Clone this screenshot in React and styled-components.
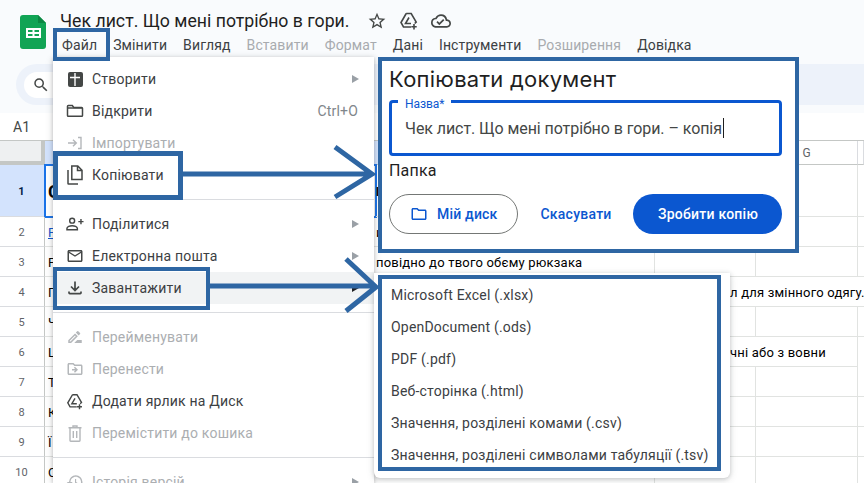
import React from "react";
import styled, { createGlobalStyle } from "styled-components";
import {
  MdOutlineCloudDone,
  MdOutlineDriveFileMove,
  MdOutlineDriveFileRenameOutline,
  MdOutlineFolder,
  MdOutlineHistory,
  MdOutlineMailOutline,
  MdOutlineSearch,
  MdOutlineStarBorder,
} from "react-icons/md";

const ANNOTATION = "#2e66a3";

const GlobalStyle = createGlobalStyle`
  html, body {
    margin: 0;
    padding: 0;
    background: #fff;
    overflow: hidden;
  }
  * {
    box-sizing: border-box;
  }
`;

const Page = styled.div`
  position: relative;
  width: 864px;
  height: 483px;
  overflow: hidden;
  background: #fff;
  font-family: Roboto, "Liberation Sans", sans-serif;
  color: #202124;
`;

const Header = styled.header`
  display: flex;
  height: 64px;
  padding-left: 20px;
  gap: 14px;
  background: #f9fbfd;
`;

const LogoWrap = styled.div`
  padding-top: 15px;
  line-height: 0;
`;

const TitleColumn = styled.div`
  display: flex;
  flex-direction: column;
`;

const TitleRow = styled.div`
  display: flex;
  align-items: center;
  height: 33px;
  padding-top: 9px;
  color: #444746;
`;

const DocTitle = styled.div`
  width: 307px;
  font-size: 17.7px;
  color: #1f1f1f;
`;

const TitleIcons = styled.div`
  display: flex;
  gap: 12px;
  font-size: 20px;
  line-height: 0;
`;

const MenuBar = styled.nav`
  display: flex;
  gap: 16px;
  height: 24px;
  align-items: center;
  padding-left: 2px;
`;

const MenuBarItem = styled.span`
  font-size: 14px;
  letter-spacing: 0.13px;
  color: ${(p) => (p.$off ? "#a8abaf" : "#3c4043")};
`;

const ToolbarWrap = styled.div`
  height: 49px;
  padding: 0 0 8px 16px;
  background: #f9fbfd;
`;

const Toolbar = styled.div`
  height: 41px;
  display: flex;
  align-items: center;
  padding-left: 8px;
  border-radius: 22px 0 0 22px;
  background: #edf2fa;
`;

const SearchPill = styled.div`
  display: flex;
  align-items: center;
  width: 140px;
  height: 26px;
  padding-left: 8px;
  border-radius: 13px;
  background: #fff;
  font-size: 18px;
  color: #444746;
`;

const FormulaBar = styled.div`
  display: flex;
  align-items: center;
  height: 28px;
  padding-left: 13px;
  font-size: 14px;
  color: #444746;
  border-bottom: 1px solid #c4c7c5;
`;

const HeaderRow = styled.div`
  display: grid;
  grid-template-columns: 45px 610px 101px 102px 1fr;
  height: 24px;
  background: #fff;
`;

const Corner = styled.div`
  background: #eef0f1;
  border-right: 4px solid #c4c7c5;
  border-bottom: 4px solid #c4c7c5;
`;

const ColHead = styled.div`
  display: flex;
  align-items: center;
  justify-content: center;
  font-size: 12px;
  color: #5f6368;
  background: ${(p) => (p.$active ? "#d3e3fd" : "#fff")};
  border-right: 1px solid #dadce0;
  border-bottom: 1px solid #c4c7c5;
`;

const Row = styled.div`
  display: grid;
  grid-template-columns: 45px 331px 279px 101px 102px 1fr;
  height: ${(p) => p.$height || 30}px;
`;

const RowNum = styled.div`
  display: flex;
  align-items: center;
  justify-content: center;
  padding: 1px 1px 0 0;
  font-size: 11px;
  font-weight: ${(p) => (p.$active ? 700 : 400)};
  color: ${(p) => (p.$active ? "#041e49" : "#5f6368")};
  background: ${(p) => (p.$active ? "#d3e3fd" : "#fff")};
  border-right: 1px solid #c4c7c5;
  border-bottom: 1px solid #dadce0;
`;

const Cell = styled.div`
  display: flex;
  align-items: center;
  padding-top: 2px;
  padding-left: ${(p) => p.$pad || 0}px;
  white-space: nowrap;
  font-size: 13px;
  font-weight: ${(p) => (p.$bold ? 700 : 400)};
  letter-spacing: 0.2px;
  color: #000;
  border-bottom: 1px solid #e1e3e1;
  border-right: ${(p) => (p.$line ? "1px solid #e1e3e1" : "none")};
  grid-column: ${(p) => (p.$span ? `span ${p.$span}` : "auto")};
`;

const FirstCell = styled(Cell)`
  padding-left: 3px;
  outline: ${(p) => (p.$selected ? "2px solid #1a73e8" : "none")};
  outline-offset: -1px;
  font-size: ${(p) => (p.$selected ? "18px" : "13px")};
  font-weight: ${(p) => (p.$selected ? 700 : 400)};
`;

const LinkText = styled.span`
  color: #1155cc;
  text-decoration: underline;
`;

const Menu = styled.div`
  position: absolute;
  left: 53px;
  top: 57px;
  width: 321px;
  height: 426px;
  padding-top: 6px;
  overflow: hidden;
  background: #fff;
  box-shadow: 0 1px 4px rgba(60, 64, 67, 0.3), 0 2px 8px rgba(60, 64, 67, 0.15);
`;

const MenuItem = styled.div`
  display: flex;
  align-items: center;
  height: 32px;
  padding: 0 16px 0 13px;
  font-size: 14px;
  letter-spacing: 0.2px;
  color: ${(p) => (p.$off ? "#abaeb1" : "#3c4043")};
  background: ${(p) => (p.$hover ? "#f1f3f4" : "transparent")};
`;

const MenuIcon = styled.span`
  display: flex;
  align-items: center;
  justify-content: center;
  width: 18px;
  margin-right: 8px;
  font-size: 18px;
  color: ${(p) => (p.$off ? "#b4b7ba" : "#444746")};
`;

const MenuLabel = styled.span`
  flex: 1;
`;

const Shortcut = styled.span`
  color: #80868b;
  letter-spacing: 0.2px;
`;

const SubArrow = styled.span`
  width: 0;
  height: 0;
  margin-right: -1px;
  border-left: 7px solid ${(p) => (p.$dark ? "#202124" : "#9aa0a6")};
  border-top: 4px solid transparent;
  border-bottom: 4px solid transparent;
`;

const Divider = styled.div`
  height: 1px;
  margin: 8px 0;
  background: #dadce0;
`;

const Dialog = styled.section`
  position: absolute;
  left: 378px;
  top: 57px;
  width: 421px;
  height: 196px;
  padding: 0 13px 0 7px;
  background: #fff;
  border: 4px solid ${ANNOTATION};
`;

const DialogTitle = styled.h2`
  margin: 0;
  height: 36px;
  line-height: 36px;
  font-family: Inter, "Open Sans", sans-serif;
  font-size: 22px;
  font-weight: 400;
  letter-spacing: 0.25px;
  color: #1f1f1f;
`;

const Field = styled.div`
  position: relative;
  display: flex;
  align-items: center;
  height: 56px;
  margin-top: 3px;
  padding-left: 13px;
  border: 3px solid #0b57d0;
  border-radius: 4px;
  font-size: 16px;
  letter-spacing: -0.07px;
  color: #444746;
`;

const FieldLabel = styled.label`
  position: absolute;
  left: 6px;
  top: -5px;
  padding: 0 7px;
  background: #fff;
  font-size: 12px;
  line-height: 12px;
  color: #0b57d0;
`;

const Caret = styled.span`
  width: 1px;
  height: 20px;
  margin-left: 1px;
  background: #1f1f1f;
`;

const FolderLabel = styled.div`
  height: 24px;
  margin-top: 3px;
  line-height: 24px;
  font-size: 16px;
  letter-spacing: 0.2px;
  color: #1f1f1f;
`;

const DialogActions = styled.div`
  display: flex;
  justify-content: space-between;
  align-items: center;
  margin-top: 11px;
`;

const FolderButton = styled.button`
  display: flex;
  align-items: center;
  gap: 9px;
  width: 129px;
  height: 40px;
  padding: 0 0 0 20px;
  background: #fff;
  border: 1px solid #747775;
  border-radius: 20px;
  font-family: inherit;
  font-size: 14px;
  font-weight: 500;
  letter-spacing: 0.2px;
  color: #0b57d0;
  svg {
    font-size: 18px;
  }
`;

const TextButton = styled.button`
  width: 95px;
  height: 40px;
  padding: 0 0 0 1px;
  background: none;
  border: 0;
  font-family: inherit;
  font-size: 14px;
  font-weight: 500;
  letter-spacing: 0.25px;
  color: #0b57d0;
`;

const PrimaryButton = styled(TextButton)`
  width: 149px;
  background: #0b57d0;
  border-radius: 20px;
  color: #fff;
`;

const SubMenu = styled.div`
  position: absolute;
  left: 374px;
  top: 273px;
  width: 356px;
  height: 205px;
  padding: 2px 0 0 4px;
  background: #fff;
  border-radius: 0 0 6px 6px;
  box-shadow: 0 1px 4px rgba(60, 64, 67, 0.25), 0 2px 8px rgba(60, 64, 67, 0.12);
`;

const SubMenuList = styled.div`
  width: 343px;
  height: 196px;
  padding-left: 9px;
  border: 4px solid ${ANNOTATION};
`;

const SubMenuItem = styled.div`
  display: flex;
  align-items: center;
  height: 32px;
  font-size: 14px;
  letter-spacing: 0.2px;
  color: #3c4043;
`;

const Frame = styled.div`
  position: absolute;
  left: ${(p) => p.$x}px;
  top: ${(p) => p.$y}px;
  width: ${(p) => p.$w}px;
  height: ${(p) => p.$h}px;
  border: ${(p) => p.$b || 4}px solid ${ANNOTATION};
`;

const Arrow = styled.svg`
  position: absolute;
  left: 0;
  top: 0;
  pointer-events: none;
`;

function SheetsLogo() {
  return (
    <svg width="26" height="34" viewBox="0 0 26 34">
      <path d="M3 0h15l8 8v23a3 3 0 0 1-3 3H3a3 3 0 0 1-3-3V3a3 3 0 0 1 3-3z" fill="#11a455" />
      <path d="M18 0l8 8h-8z" fill="#0c8743" />
      <path d="M6 13h15v10H6z" fill="#fff" />
      <path d="M8 15h4.500v2H8zM14.500 15H19v2h-4.500zM8 19h4.500v2H8zM14.500 19H19v2h-4.500z" fill="#11a455" />
    </svg>
  );
}

function NewIcon() {
  return (
    <svg width="15" height="15" viewBox="0 0 15 15">
      <rect width="15" height="15" rx="2" fill="#444746" />
      <path d="M7 1v13M2 5.500h10" stroke="#fff" strokeWidth="1.4" />
    </svg>
  );
}

function OpenIcon() {
  return (
    <svg width="18" height="18" viewBox="0 0 18 18" fill="none" stroke="#444746" strokeWidth="1.5">
      <path d="M1.500 13.500V4.300c0-.4.3-.8.800-.8h4l1.500 2h7.900c.4 0 .8.300.8.800v7.200c0 .4-.4.800-.8.800H2.300c-.5 0-.8-.4-.8-.8z" />
      <path d="M2 6h14" />
    </svg>
  );
}

function ImportIcon() {
  return (
    <svg width="16" height="14" viewBox="0 0 16 14" fill="none" stroke="#b4b7ba" strokeWidth="1.4">
      <path d="M1 7h8M6 3.800 9.300 7 6 10.200M11 1.500h3v11h-3" />
    </svg>
  );
}

function CopyIcon() {
  return (
    <svg width="16" height="20" viewBox="0 0 16 20" fill="none" stroke="#444746" strokeWidth="1.5">
      <path d="M4.800 1h6l4.200 4.200v9.300H4.800zM10.500 1v4.500H15" />
      <path d="M1 5v13.500c0 .3.200.5.500.5H11" />
    </svg>
  );
}

function ShareIcon() {
  return (
    <svg width="19" height="14" viewBox="0 0 19 14" fill="none" stroke="#444746" strokeWidth="1.5">
      <circle cx="6.500" cy="3.500" r="2.600" />
      <path d="M1 13v-1.200c0-1.800 3-3 5.500-3s5.500 1.200 5.500 3V13z" />
      <path d="M13 4.500h5.500M15.800 1.800v5.400" />
    </svg>
  );
}

function DownloadIcon() {
  return (
    <svg width="14" height="14" viewBox="0 0 14 14" fill="none" stroke="#444746" strokeWidth="1.7">
      <path d="M7 0.500v8.500M3 5.500l4 4 4-4M1 10.500v1.300c0 .5.300.8.800.8h10.400c.5 0 .8-.3.800-.8v-1.300" />
    </svg>
  );
}

function DriveAddIcon({ size = 20 }) {
  return (
    <svg width={size} height={size} viewBox="0 0 20 20" fill="none" stroke="currentColor" strokeWidth="1.6">
      <path d="M7.200 2.500h5l5 8.500-1.500 1.500M7.200 2.500 2 11.500l2.500 4.500h7.500" />
      <path d="M10 6.500 6.500 12.500h5.500" />
      <path d="M15 13v5.500M12.300 15.800h5.400" />
    </svg>
  );
}

function TrashIcon() {
  return (
    <svg width="14" height="17" viewBox="0 0 14 17" fill="none" stroke="#b4b7ba" strokeWidth="1.4">
      <path d="M0.500 2.800h13M5 2.800V1h4v1.800M2 2.800v12.700c0 .4.300.7.700.7h8.600c.4 0 .7-.3.700-.7V2.800M5.300 6v7M8.700 6v7" />
    </svg>
  );
}

const arrows = [
  "M183 174H372M335 147 372 174 335 197",
  "M210 286H375M346 259 376 287 346 311",
];

const fileItems = [
  { label: "Створити", icon: <NewIcon />, sub: true },
  { label: "Відкрити", icon: <OpenIcon />, shortcut: "Ctrl+O" },
  { label: "Імпортувати", icon: <ImportIcon />, off: true },
  { label: "Копіювати", icon: <CopyIcon /> },
  "divider",
  { label: "Поділитися", icon: <ShareIcon />, sub: true },
  { label: "Електронна пошта", icon: <MdOutlineMailOutline size={20} />, sub: true },
  { label: "Завантажити", icon: <DownloadIcon />, sub: true, hover: true },
  "divider",
  { label: "Перейменувати", icon: <MdOutlineDriveFileRenameOutline />, off: true },
  { label: "Перенести", icon: <MdOutlineDriveFileMove />, off: true },
  { label: "Додати ярлик на Диск", icon: <DriveAddIcon size={19} /> },
  { label: "Перемістити до кошика", icon: <TrashIcon />, off: true },
  "divider",
  { label: "Історія версій", icon: <MdOutlineHistory />, off: true, sub: true },
];

const menuBar = [
  { label: "Файл" },
  { label: "Змінити" },
  { label: "Вигляд" },
  { label: "Вставити", off: true },
  { label: "Формат", off: true },
  { label: "Дані" },
  { label: "Інструменти" },
  { label: "Розширення", off: true },
  { label: "Довідка" },
];

const downloads = [
  "Microsoft Excel (.xlsx)",
  "OpenDocument (.ods)",
  "PDF (.pdf)",
  "Веб-сторінка (.html)",
  "Значення, розділені комами (.csv)",
  "Значення, розділені символами табуляції (.tsv)",
];

const rows = [
  { n: 2, first: <LinkText>F</LinkText>, mid: "и" },
  { n: 3, first: "Р", mid: "повідно до твого обєму рюкзака" },
  { n: 4, first: "П", far: "л для змінного одягу.", span: 3 },
  { n: 5, first: "Ч" },
  { n: 6, first: "L", far: "чні або з вовни", span: 2 },
  { n: 7, first: "Т" },
  { n: 8, first: "К" },
  { n: 9, first: "Ї" },
  { n: 10, first: "О" },
];

function SheetRow({ n, first, mid, far, span }) {
  return (
    <Row>
      <RowNum>{n}</RowNum>
      <FirstCell>{first}</FirstCell>
      <Cell $line>{mid}</Cell>
      {far ? (
        <Cell $pad={75} $span={span} $line={span === 2}>
          {far}
        </Cell>
      ) : (
        <>
          <Cell $line />
          <Cell $line />
          <Cell />
        </>
      )}
    </Row>
  );
}

export default function App() {
  return (
    <Page>
      <GlobalStyle />
      <Header>
        <LogoWrap>
          <SheetsLogo />
        </LogoWrap>
        <TitleColumn>
          <TitleRow>
            <DocTitle>Чек лист. Що мені потрібно в гори.</DocTitle>
            <TitleIcons>
              <MdOutlineStarBorder />
              <DriveAddIcon />
              <MdOutlineCloudDone />
            </TitleIcons>
          </TitleRow>
          <MenuBar>
            {menuBar.map((item) => (
              <MenuBarItem key={item.label} $off={item.off}>
                {item.label}
              </MenuBarItem>
            ))}
          </MenuBar>
        </TitleColumn>
      </Header>
      <ToolbarWrap>
        <Toolbar>
          <SearchPill>
            <MdOutlineSearch />
          </SearchPill>
        </Toolbar>
      </ToolbarWrap>
      <FormulaBar>A1</FormulaBar>

      <HeaderRow>
        <Corner />
        <ColHead $active />
        <ColHead />
        <ColHead>G</ColHead>
        <ColHead />
      </HeaderRow>
      <Row $height={52}>
        <RowNum $active>1</RowNum>
        <FirstCell $selected>С</FirstCell>
        <Cell $line $bold>
          Е
        </Cell>
        <Cell $line />
        <Cell $line />
        <Cell />
      </Row>
      {rows.map((row) => (
        <SheetRow key={row.n} {...row} />
      ))}

      <Menu>
        {fileItems.map((item, i) =>
          item === "divider" ? (
            <Divider key={i} />
          ) : (
            <MenuItem key={item.label} $off={item.off} $hover={item.hover}>
              <MenuIcon $off={item.off}>{item.icon}</MenuIcon>
              <MenuLabel>{item.label}</MenuLabel>
              {item.shortcut && <Shortcut>{item.shortcut}</Shortcut>}
              {item.sub && <SubArrow $dark={item.hover} />}
            </MenuItem>
          )
        )}
      </Menu>

      <Dialog>
        <DialogTitle>Копіювати документ</DialogTitle>
        <Field>
          <FieldLabel>Назва*</FieldLabel>
          Чек лист. Що мені потрібно в гори. – копія
          <Caret />
        </Field>
        <FolderLabel>Папка</FolderLabel>
        <DialogActions>
          <FolderButton>
            <MdOutlineFolder />
            Мій диск
          </FolderButton>
          <TextButton>Скасувати</TextButton>
          <PrimaryButton>Зробити копію</PrimaryButton>
        </DialogActions>
      </Dialog>

      <SubMenu>
        <SubMenuList>
          {downloads.map((label) => (
            <SubMenuItem key={label}>{label}</SubMenuItem>
          ))}
        </SubMenuList>
      </SubMenu>

      <Frame $x={53} $y={28} $w={57} $h={33} />
      <Frame $x={53} $y={151} $w={130} $h={49} $b={5} />
      <Frame $x={53} $y={267} $w={157} $h={43} />

      <Arrow width="864" height="483" viewBox="0 0 864 483" fill="none" stroke={ANNOTATION} strokeWidth="5">
        {arrows.map((d) => (
          <path key={d} d={d} />
        ))}
      </Arrow>
    </Page>
  );
}
